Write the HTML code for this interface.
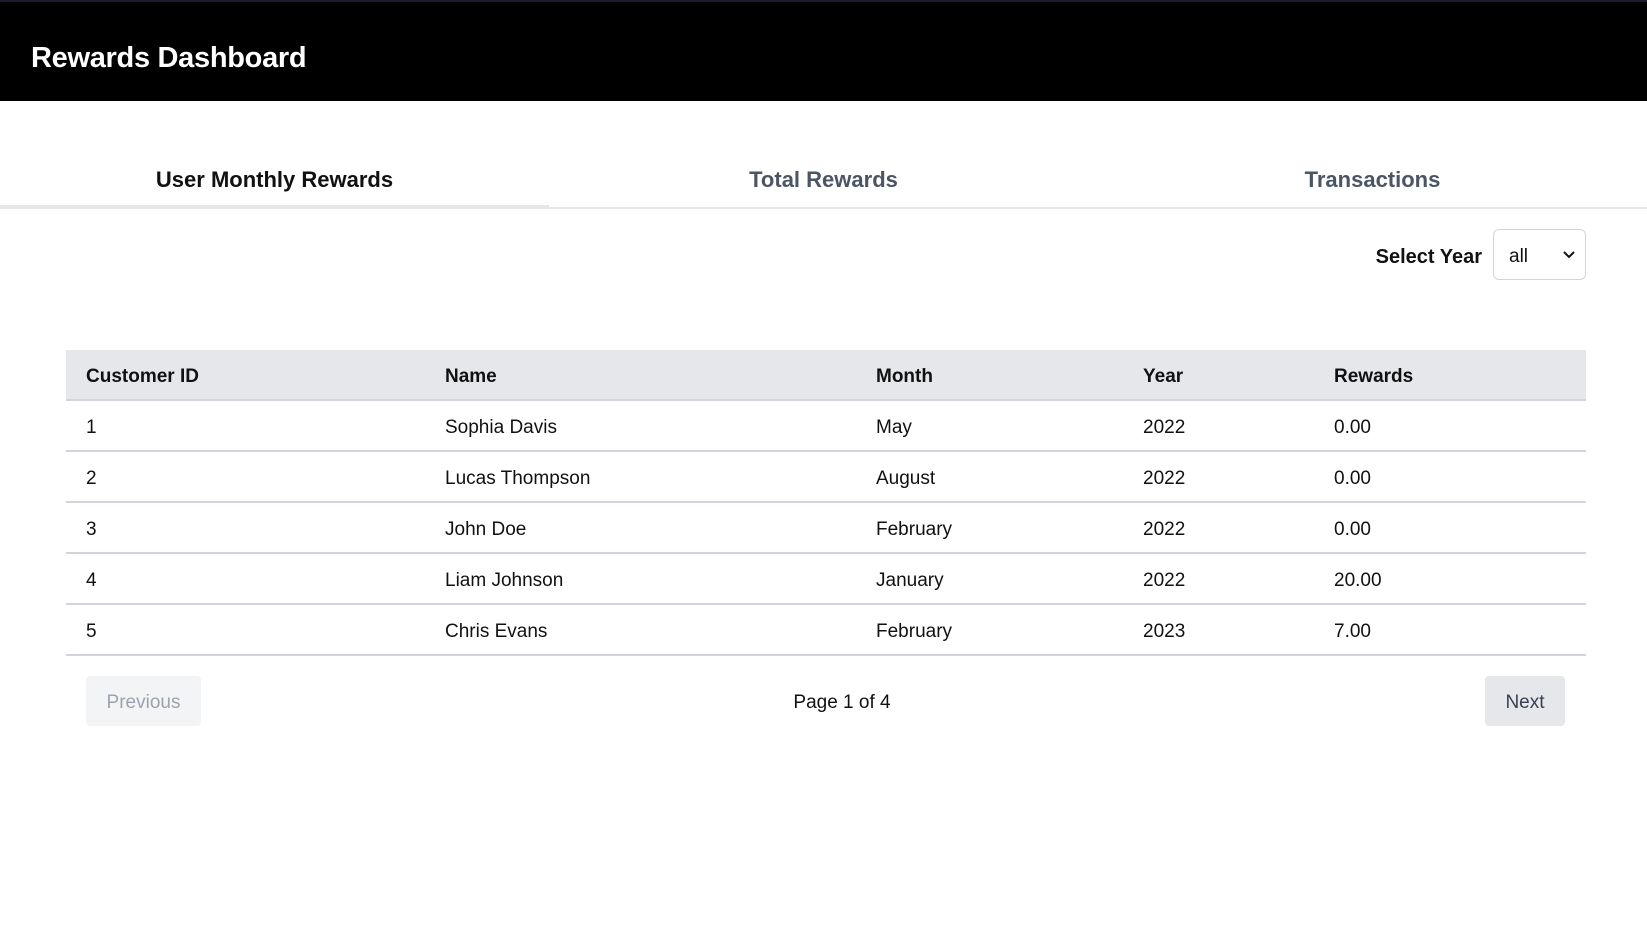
<!DOCTYPE html>
<html><head><meta charset="utf-8"><style>
*{box-sizing:border-box;margin:0;padding:0}
body{width:1647px;height:936px;background:#fff;font-family:"Liberation Sans",sans-serif;color:#111;position:relative;overflow:hidden}
.hdr{position:absolute;left:0;top:0;width:1647px;height:101px;background:#000;border-top:2px solid #1e1b2e}
.hdr h1{position:absolute;left:31px;top:40px;font-size:29px;font-weight:bold;color:#fff;letter-spacing:-0.3px}
.tabs{position:absolute;left:0;top:150px;width:1647px;height:59px;border-bottom:2px solid #e5e7eb}
.tab{position:absolute;top:17px;width:549px;text-align:center;font-size:22px;font-weight:bold;color:#4b5563}
.tab.a{color:#111}
.ul{position:absolute;left:0;top:205px;width:549px;height:3px;background:#e5e7eb}
.sel-l{position:absolute;right:165px;top:246px;font-size:20px;font-weight:bold;color:#111}
.sel{position:absolute;left:1493px;top:229px;width:93px;height:51px;border:1px solid #d1d5db;border-radius:6px;font-size:19px;padding:16px 0 0 15px;color:#111}
.sel svg{position:absolute;right:10px;top:21px}
table{position:absolute;left:66px;top:350px;width:1520px;border-collapse:collapse;font-size:19px}
th{background:#e5e7eb;height:50px;text-align:left;font-weight:bold;border-bottom:2px solid #d1d5db}
td{height:51px;border-bottom:2px solid #d1d5db}
th,td{padding:4px 0 0 20px}
.btn{position:absolute;top:676px;height:50px;border-radius:4px;font-size:19px;padding-top:16px;text-align:center}
.prev{left:86px;width:115px;background:#f3f4f6;color:#9ca3af}
.next{left:1485px;width:80px;background:#e5e7eb;color:#374151}
.pg{position:absolute;left:742px;width:200px;text-align:center;top:692px;font-size:19px}
</style></head><body>
<div class="hdr"><h1>Rewards Dashboard</h1></div>
<div class="tabs">
<div class="tab a" style="left:0">User Monthly Rewards</div>
<div class="tab" style="left:549px">Total Rewards</div>
<div class="tab" style="left:1098px">Transactions</div>
</div>
<div class="ul"></div>
<div class="sel-l">Select Year</div>
<div class="sel">all<svg width="12" height="8" viewBox="0 0 12 8"><path d="M1 1l5 5 5-5" fill="none" stroke="#111" stroke-width="2"/></svg></div>
<table>
<colgroup><col style="width:359px"><col style="width:431px"><col style="width:267px"><col style="width:191px"><col></colgroup>
<tr><th>Customer ID</th><th>Name</th><th>Month</th><th>Year</th><th>Rewards</th></tr>
<tr><td>1</td><td>Sophia Davis</td><td>May</td><td>2022</td><td>0.00</td></tr>
<tr><td>2</td><td>Lucas Thompson</td><td>August</td><td>2022</td><td>0.00</td></tr>
<tr><td>3</td><td>John Doe</td><td>February</td><td>2022</td><td>0.00</td></tr>
<tr><td>4</td><td>Liam Johnson</td><td>January</td><td>2022</td><td>20.00</td></tr>
<tr><td>5</td><td>Chris Evans</td><td>February</td><td>2023</td><td>7.00</td></tr>
</table>
<div class="btn prev">Previous</div>
<div class="pg">Page 1 of 4</div>
<div class="btn next">Next</div>
</body></html>
